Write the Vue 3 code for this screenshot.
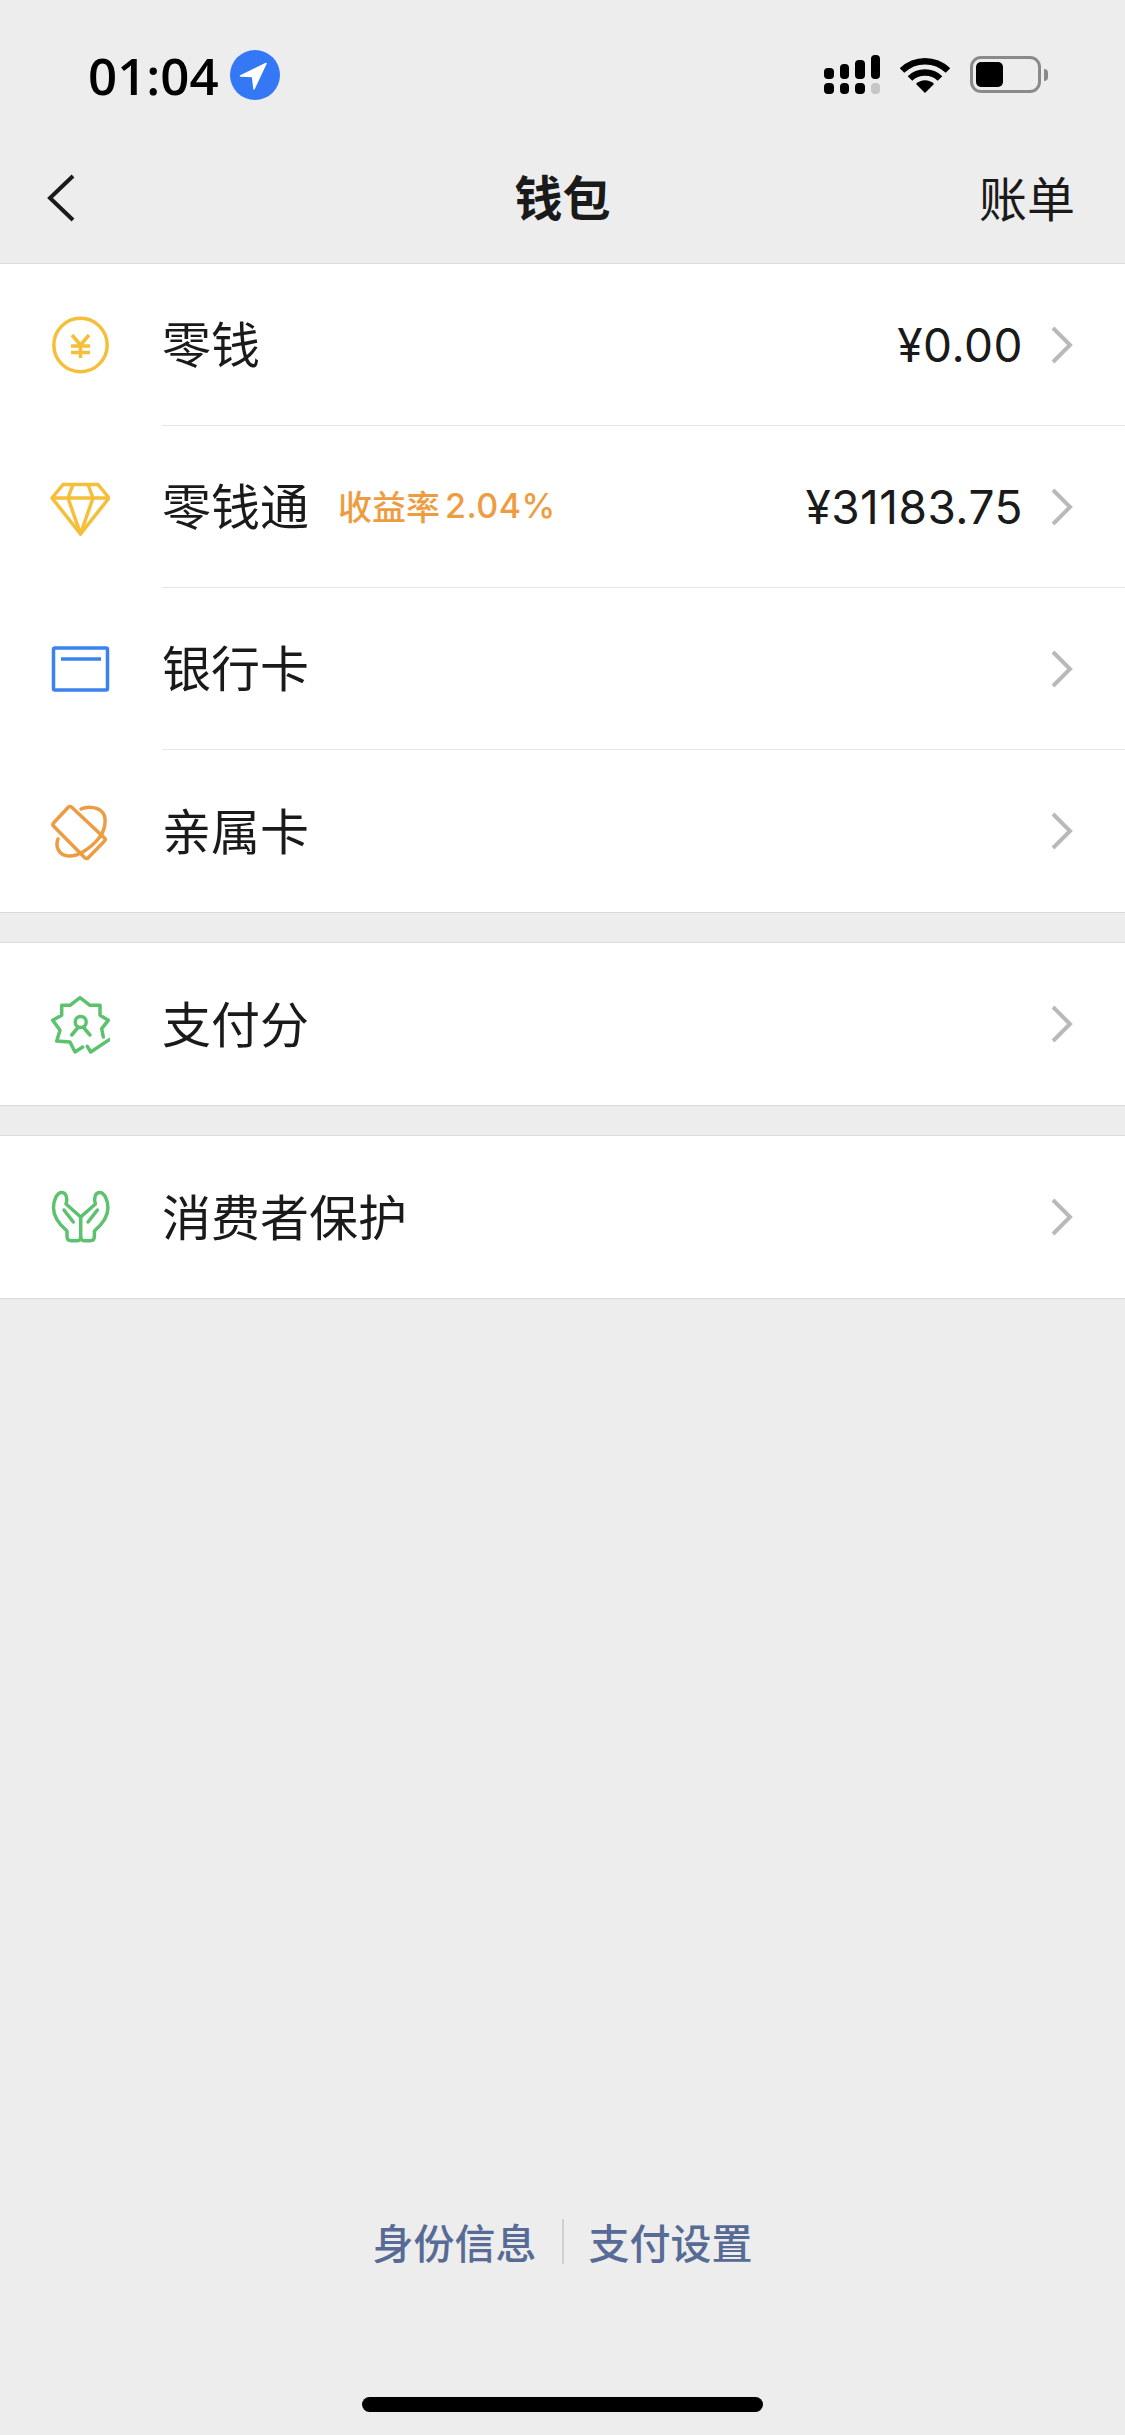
<script setup>
// wallet rows, grouped the same way as on the page
const groups = [
  [
    { key: "coin", label: "零钱", amount: "¥0.00" },
    { key: "gem", label: "零钱通", tag: "收益率", rate: "2.04%", amount: "¥31183.75" },
    { key: "card", label: "银行卡" },
    { key: "family", label: "亲属卡" },
  ],
  [{ key: "score", label: "支付分" }],
  [{ key: "hands", label: "消费者保护" }],
];
const signal = [11, 15, 19, 24];
</script>

<template>
  <div class="page">
    <header class="status">
      <div class="status-left">
        <span class="time">01:04</span>
        <svg class="loc" width="50" height="50" viewBox="0 0 50 50">
          <circle cx="25" cy="25" r="25" fill="#3478f6" />
          <path d="M36 13.500 L10.500 26 L22.500 26.500 L24 39 Z" fill="#fff" stroke="#fff" stroke-width="1.500" stroke-linejoin="round" />
        </svg>
      </div>
      <div class="status-right">
        <div class="signal">
          <div v-for="(h, i) in signal" :key="i" class="signal-col">
            <i class="bar" :style="{ height: h + 'px' }"></i>
            <i class="dot" :class="{ off: i === 3 }"></i>
          </div>
        </div>
        <svg width="50" height="36" viewBox="0 0 50 36">
          <path d="M2 13.500 C15 1 35 1 48 13.500" fill="none" stroke="#000" stroke-width="6.500" />
          <path d="M10 21.500 C18 13.500 32 13.500 40 21.500" fill="none" stroke="#000" stroke-width="6.500" />
          <path d="M16 27 C21 22 29 22 34 27 L25 36 Z" fill="#000" />
        </svg>
        <div class="battery">
          <div class="battery-body"><i class="battery-level"></i></div>
          <i class="battery-cap"></i>
        </div>
      </div>
    </header>

    <nav class="nav">
      <svg class="back" width="28" height="48" viewBox="0 0 28 48">
        <path d="M26 2 L3 24 L26 46" fill="none" stroke="#1a1a1a" stroke-width="4" />
      </svg>
      <h1 class="title">钱包</h1>
      <span class="bill">账单</span>
    </nav>

    <section v-for="(group, g) in groups" :key="g" class="group">
      <div v-for="item in group" :key="item.key" class="row">
        <svg class="icon" width="60" height="60" viewBox="0 0 60 60" fill="none" stroke-width="3.500">
          <g v-if="item.key === 'coin'" stroke="#f5bf3a">
            <circle cx="30.500" cy="30" r="26.700" />
            <path d="M22 20 L30.500 30 L39 20 M21 31 H40 M21 37.500 H40 M30.500 30 V43" />
          </g>
          <g v-else-if="item.key === 'gem'" stroke="#f5bf3a" stroke-linejoin="round">
            <path d="M13 7.500 H48 L59 21 L30.500 57 L2 21 Z" />
            <path d="M2 21 H59 M23 7.500 L18 21 L30.500 57 L43 21 L38 7.500" />
          </g>
          <g v-else-if="item.key === 'card'" stroke="#3b82ee" stroke-linejoin="round">
            <rect x="3.500" y="9" width="54" height="42" rx="1.500" />
            <path d="M11 20 H51" />
          </g>
          <g v-else-if="item.key === 'family'" stroke="#ee9c42" stroke-linejoin="round" stroke-linecap="round">
            <path d="M18.500 6 Q20 5 21.500 6 L54.500 37 Q56 38.500 54.500 40 L38 57 Q36.700 58 35 57 L3.500 25 Q2.300 23.500 3.500 22 Z" />
            <path d="M8 38 C5 46 9 54 18 55 C27 56 40 48 49 37 C55 30 57 18 53 12 C49 6 38 5 31 8" />
          </g>
          <g v-else-if="item.key === 'score'" stroke="#5cc26e" stroke-linejoin="round" stroke-linecap="round">
            <path d="M53.300 43 L51.700 34.700 L58.300 26.300 L50 21.300 L50 11.300 L40 11.300 L30 3.700 L20 11.300 L11.700 11.300 L11.700 21.300 L2.700 26.300 L10 36.300 L6.700 47 L20 48 L25 58 L32.700 53" />
            <path d="M37.300 52.300 L40.700 58 L59.300 45.700" />
            <circle cx="30.700" cy="28" r="5.500" />
            <path d="M21.700 41 L28 33.500 M40 41 L33.500 33.500" />
          </g>
          <g v-else stroke="#5cc26e" stroke-linejoin="round" stroke-linecap="round">
            <path d="M30.700 30 L16 17 C18 11 16 5.500 11.700 5.500 C7 5.500 3.500 13 3.500 21 C3.500 30 10 38 17 44 V49 C17 52 18.500 53.700 21 53.700 H27.500 C29.500 53.700 30.700 52 30.700 50 Z" />
            <path d="M30.700 30 L45.400 17 C43.400 11 45.400 5.500 49.700 5.500 C54.400 5.500 57.900 13 57.900 21 C57.900 30 51.400 38 44.400 44 V49 C44.400 52 42.900 53.700 40.400 53.700 H33.900 C31.900 53.700 30.700 52 30.700 50" />
            <path d="M14 23 L23.300 35 M47.400 23 L38.100 35" />
          </g>
        </svg>
        <div class="row-body">
          <span class="label">{{ item.label }}</span>
          <span v-if="item.tag" class="tag">{{ item.tag }}</span>
          <span v-if="item.rate" class="rate">{{ item.rate }}</span>
          <span v-if="item.amount" class="amount">{{ item.amount }}</span>
          <svg class="arrow" width="22" height="38" viewBox="0 0 22 38">
            <path d="M2 2 L19 19 L2 36" fill="none" stroke="#b9b9b9" stroke-width="4" />
          </svg>
        </div>
      </div>
    </section>

    <footer class="footer">
      <div class="links">
        <a>身份信息</a>
        <i class="links-sep"></i>
        <a>支付设置</a>
      </div>
      <i class="home-bar"></i>
    </footer>
  </div>
</template>

<style>
html,
body {
  background: #ededed;
}
</style>

<style scoped>
.page {
  width: 1125px;
  height: 2435px;
  display: flex;
  flex-direction: column;
  background: #ededed;
  color: #1a1a1a;
  font-family: "Noto Sans CJK SC", "Liberation Sans", sans-serif;
  overflow: hidden;
}

.status {
  height: 132px;
  flex: none;
  display: flex;
  justify-content: space-between;
  align-items: flex-start;
  padding: 50px 77px 0 88px;
  box-sizing: border-box;
}

.status-left {
  display: flex;
  align-items: center;
  gap: 11px;
}

.time {
  font-family: "Open Sans", sans-serif;
  font-size: 51px;
  font-weight: 600;
  line-height: 50px;
  color: #000;
}

.status-right {
  display: flex;
  align-items: center;
  gap: 20px;
  margin-top: 5px;
}

.signal {
  display: flex;
  align-items: flex-end;
  gap: 6px;
  height: 39px;
}

.signal-col {
  display: flex;
  flex-direction: column;
  gap: 4px;
}

.bar,
.dot {
  display: block;
  width: 9.500px;
  background: #000;
  border-radius: 4px;
}

.dot {
  height: 11px;
}

.dot.off {
  background: #c6c6c6;
}

.battery {
  display: flex;
  align-items: center;
  gap: 3px;
}

.battery-body {
  width: 71px;
  height: 37px;
  border: 3px solid #8a8a8a;
  border-radius: 11px;
  box-sizing: border-box;
  padding: 3px;
}

.battery-level {
  display: block;
  width: 27px;
  height: 100%;
  background: #000;
  border-radius: 5px;
}

.battery-cap {
  display: block;
  width: 4px;
  height: 12px;
  background: #8a8a8a;
  border-radius: 0 4px 4px 0;
}

.nav {
  height: 131px;
  flex: none;
  position: relative;
  display: flex;
  align-items: center;
  justify-content: space-between;
  padding: 0 50px 0 47px;
  box-sizing: border-box;
}

.title {
  position: absolute;
  left: 0;
  right: 0;
  margin: 0 0 5px;
  text-align: center;
  font-size: 48px;
  font-weight: 700;
  line-height: 60px;
}

.bill {
  font-size: 48px;
  line-height: 60px;
  margin-bottom: 3px;
}

.group {
  flex: none;
  background: #fff;
  border-top: 1px solid #dcdcdc;
  border-bottom: 1px solid #d8d8d8;
  margin-bottom: 29px;
}

.row {
  height: 162px;
  display: flex;
  align-items: center;
  padding-left: 50px;
  box-sizing: border-box;
}

.icon {
  flex: none;
  margin-right: 52px;
}

.row-body {
  flex: 1;
  height: 100%;
  display: flex;
  align-items: center;
  padding-right: 52px;
  box-sizing: border-box;
  border-bottom: 1px solid #e6e6e6;
}

.row:last-child .row-body {
  border-bottom: none;
}

.label {
  font-size: 49px;
  line-height: 60px;
  margin-bottom: 5px;
}

.tag {
  margin-left: 29px;
  font-size: 34px;
  font-weight: 500;
  color: #ee9c42;
  margin-bottom: 3px;
}

.rate {
  margin-left: 5px;
  font-family: Inter, sans-serif;
  font-size: 34px;
  font-weight: 500;
  letter-spacing: 0.500px;
  color: #ee9c42;
  margin-bottom: 3px;
}

.amount {
  margin-left: auto;
  font-family: Inter, sans-serif;
  font-size: 46px;
  letter-spacing: 0.500px;
}

.arrow {
  flex: none;
  margin-left: 28px;
}

.row-body > .arrow:nth-child(2) {
  margin-left: auto;
}

.footer {
  margin-top: auto;
  display: flex;
  flex-direction: column;
  align-items: center;
  padding-bottom: 23px;
}

.links {
  display: flex;
  align-items: center;
  gap: 25px;
  font-size: 41px;
  font-weight: 500;
  color: #576b95;
}

.links-sep {
  display: block;
  width: 2px;
  height: 45px;
  background: #cfcfcf;
}

.home-bar {
  display: block;
  width: 401px;
  height: 15px;
  margin-top: 126px;
  background: #000;
  border-radius: 8px;
}
</style>
